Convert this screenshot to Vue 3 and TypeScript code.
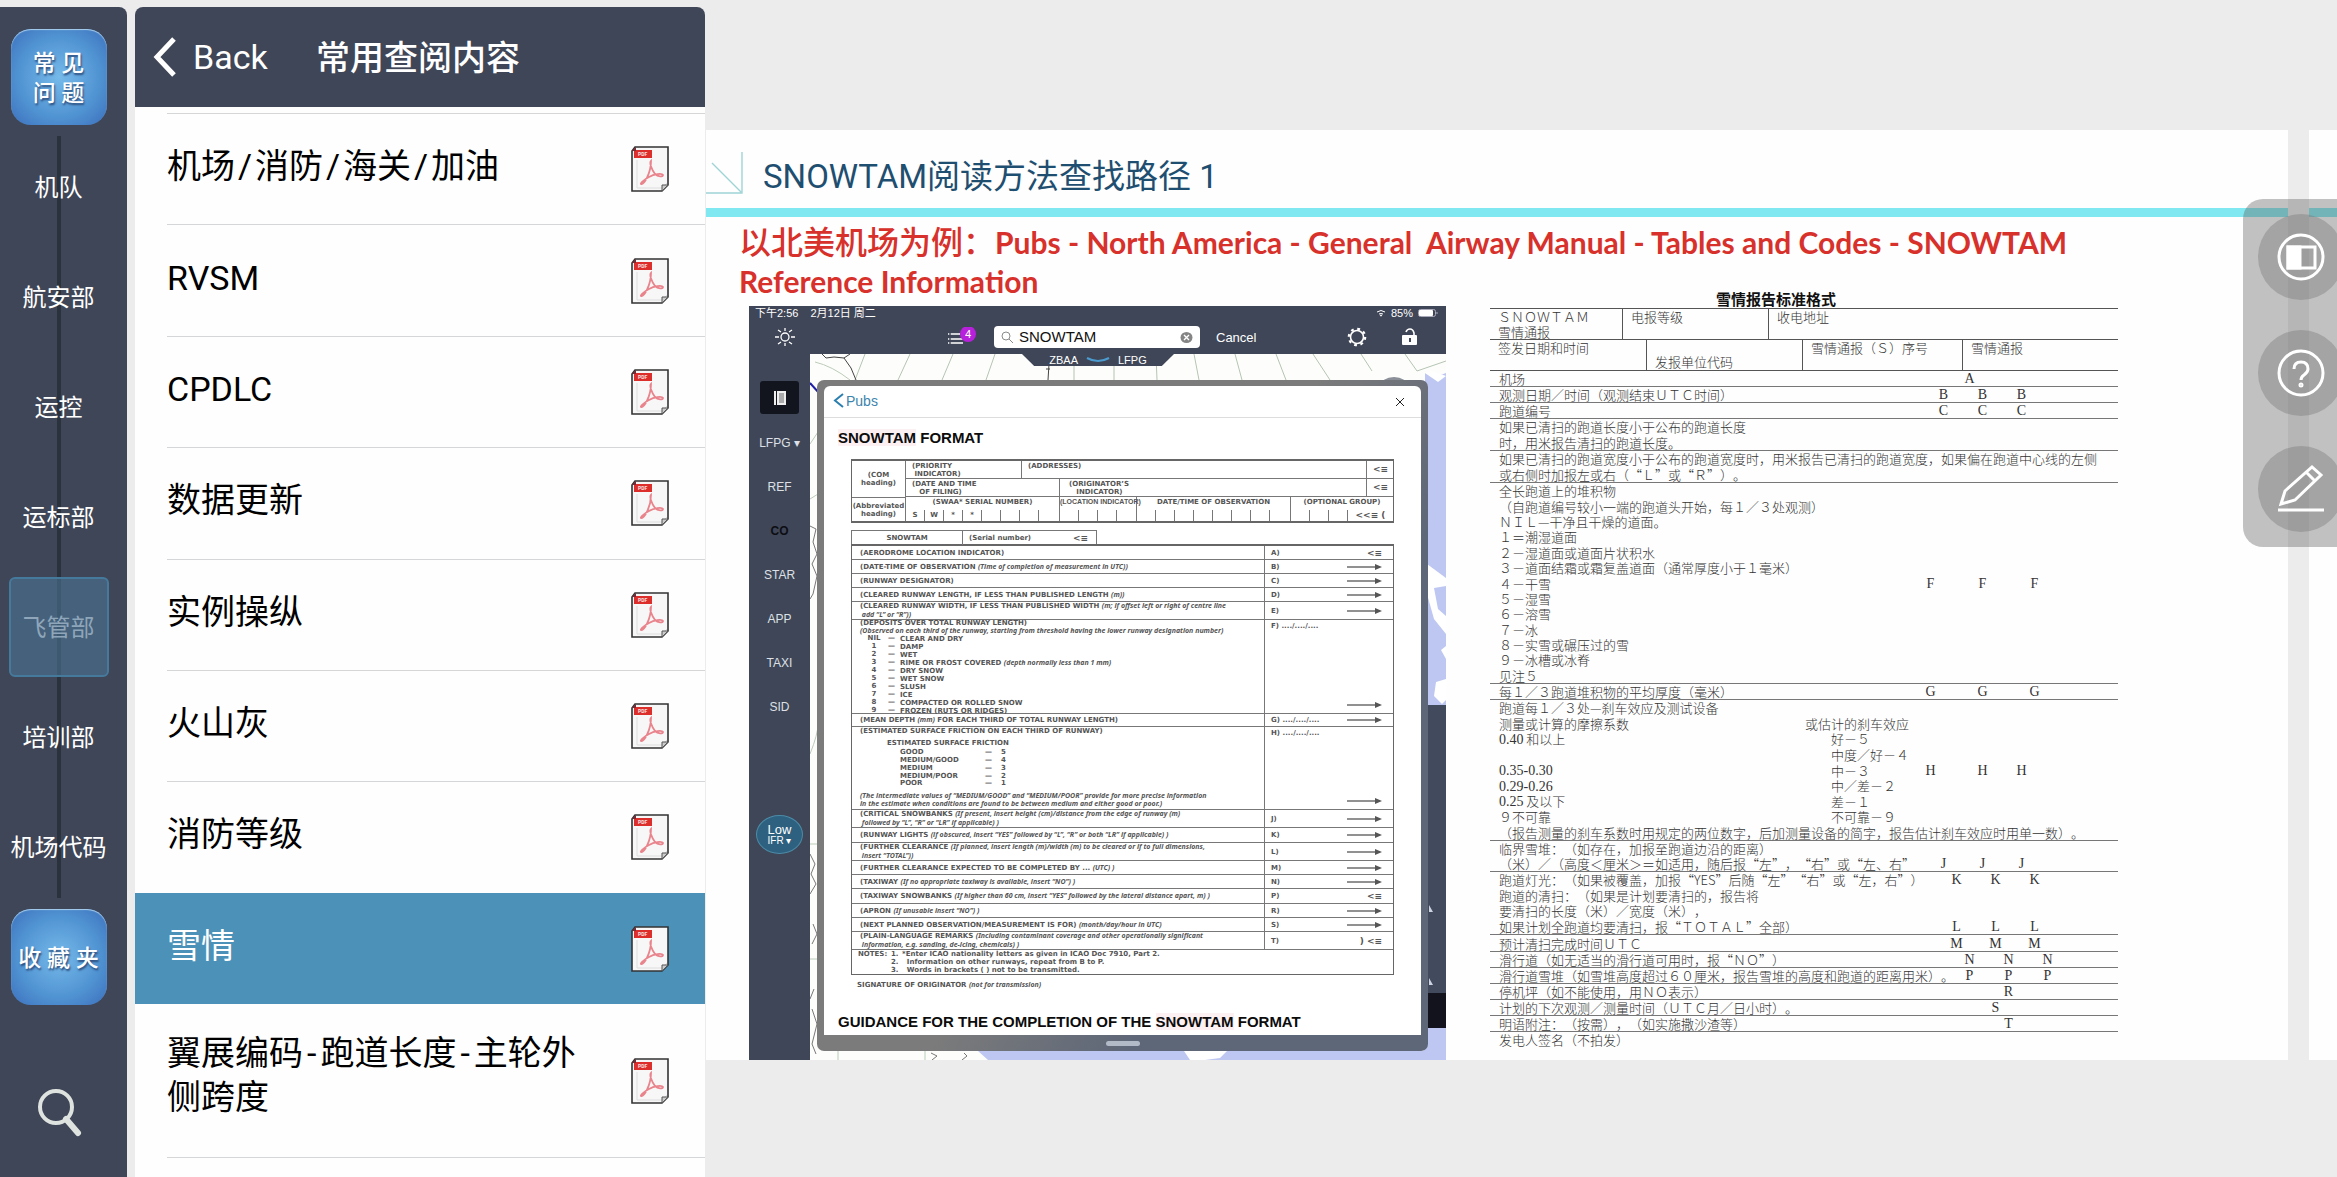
<script setup lang="ts">
import { ref } from 'vue'

const departments = ['机队', '航安部', '运控', '运标部', '飞管部', '培训部', '机场代码']
const activeDepartment = ref('飞管部')

const topics = ['机场/消防/海关/加油', 'RVSM', 'CPDLC', '数据更新', '实例操纵', '火山灰', '消防等级', '雪情', '翼展编码-跑道长度-主轮外\n侧跨度']
const activeTopic = ref('雪情')

const query = ref('SNOWTAM')
const chartTabs = ['LFPG ▾', 'REF', 'CO', 'STAR', 'APP', 'TAXI', 'SID']

interface FormRow {
  id: string
  h: number
  head?: string
  note?: string
  tail?: string
  second?: string
  mark?: string
  end?: 'arrow' | 'stop' | 'closed'
  kind?: 'deposits' | 'friction'
}

const formRows: FormRow[] = [
  { id: 'A)', h: 14, head: '(AERODROME LOCATION INDICATOR)', end: 'stop' },
  { id: 'B)', h: 14, head: '(DATE-TIME OF OBSERVATION', note: '(Time of completion of measurement in UTC))', end: 'arrow' },
  { id: 'C)', h: 14, head: '(RUNWAY DESIGNATOR)', end: 'arrow' },
  { id: 'D)', h: 14, head: '(CLEARED RUNWAY LENGTH, IF LESS THAN PUBLISHED LENGTH', note: '(m))', end: 'arrow' },
  { id: 'E)', h: 18, head: '(CLEARED RUNWAY WIDTH, IF LESS THAN PUBLISHED WIDTH', note: '(m; if offset left or right of centre line', second: 'add “L” or “R”))', end: 'arrow' },
  { id: 'F)', h: 94, mark: '..../..../....', kind: 'deposits', end: 'arrow' },
  { id: 'G)', h: 13, mark: '..../..../....', head: '(MEAN DEPTH', note: '(mm)', tail: 'FOR EACH THIRD OF TOTAL RUNWAY LENGTH)', end: 'arrow' },
  { id: 'H)', h: 83, mark: '..../..../....', kind: 'friction', end: 'arrow' },
  { id: 'J)', h: 18, head: '(CRITICAL SNOWBANKS', note: '(If present, insert height (cm)/distance from the edge of runway (m)', second: 'followed by “L”, “R” or “LR” if applicable) )', end: 'arrow' },
  { id: 'K)', h: 15, head: '(RUNWAY LIGHTS', note: '(if obscured, insert “YES” followed by “L”, “R” or both “LR” if applicable) )', end: 'arrow' },
  { id: 'L)', h: 18, head: '(FURTHER CLEARANCE', note: '(If planned, insert length (m)/width (m) to be cleared or if to full dimensions,', second: 'insert “TOTAL”))', end: 'arrow' },
  { id: 'M)', h: 14, head: '(FURTHER CLEARANCE EXPECTED TO BE COMPLETED BY ...', note: '(UTC) )', end: 'arrow' },
  { id: 'N)', h: 14, head: '(TAXIWAY', note: '(If no appropriate taxiway is available, insert “NO”) )', end: 'arrow' },
  { id: 'P)', h: 15, head: '(TAXIWAY SNOWBANKS', note: '(If higher than 60 cm, insert “YES” followed by the lateral distance apart, m) )', end: 'stop' },
  { id: 'R)', h: 14, head: '(APRON', note: '(If unusable insert “NO”) )', end: 'arrow' },
  { id: 'S)', h: 14, head: '(NEXT PLANNED OBSERVATION/MEASUREMENT IS FOR)', note: '(month/day/hour in UTC)', end: 'arrow' },
  { id: 'T)', h: 18, head: '(PLAIN-LANGUAGE REMARKS', note: '(Including contaminant coverage and other operationally significant', second: 'information, e.g. sanding, de-icing, chemicals) )', end: 'closed' },
]

const deposits = [
  ['NIL', 'CLEAR AND DRY'], ['1', 'DAMP'], ['2', 'WET'], ['3', 'RIME OR FROST COVERED', '(depth normally less than 1 mm)'],
  ['4', 'DRY SNOW'], ['5', 'WET SNOW'], ['6', 'SLUSH'], ['7', 'ICE'], ['8', 'COMPACTED OR ROLLED SNOW'], ['9', 'FROZEN (RUTS OR RIDGES)'],
]
const friction = [['GOOD', '5'], ['MEDIUM/GOOD', '4'], ['MEDIUM', '3'], ['MEDIUM/POOR', '2'], ['POOR', '1']]

// One line of the report: text, an optional middle column, and letters on a 13px raster ("_" is an empty place).
interface Line { t: string; num?: string; mid?: string; marks?: string }
const reportRows: { h: number; lines: Line[] }[] = [
  { h: 16, lines: [{ t: '机场', marks: '___A' }] },
  { h: 16, lines: [{ t: '观测日期／时间（观测结束ＵＴＣ时间）', marks: '_B__B__B' }] },
  { h: 16, lines: [{ t: '跑道编号', marks: '_C__C__C' }] },
  { h: 32, lines: [{ t: '如果已清扫的跑道长度小于公布的跑道长度' }, { t: '时，用米报告清扫的跑道长度。' }] },
  { h: 32, lines: [{ t: '如果已清扫的跑道宽度小于公布的跑道宽度时，用米报告已清扫的跑道宽度，如果偏在跑道中心线的左侧' }, { t: '或右侧时加报左或右（“Ｌ”或“Ｒ”）。' }] },
  { h: 201, lines: [
    { t: '全长跑道上的堆积物' }, { t: '（自跑道编号较小一端的跑道头开始，每１／３处观测）' }, { t: 'ＮＩＬ—干净且干燥的道面。' },
    { t: '１＝潮湿道面' }, { t: '２－湿道面或道面片状积水' }, { t: '３－道面结霜或霜复盖道面（通常厚度小于１毫米）' },
    { t: '４－干雪', marks: 'F___F___F' }, { t: '５－湿雪' }, { t: '６－溶雪' }, { t: '７－冰' }, { t: '８－实雪或碾压过的雪' },
    { t: '９－冰槽或冰脊' }, { t: '见注５' },
  ] },
  { h: 16, lines: [{ t: '每１／３跑道堆积物的平均厚度（毫米）', marks: 'G___G___G' }] },
  { h: 141, lines: [
    { t: '跑道每１／３处—刹车效应及测试设备' }, { t: '测量或计算的摩擦系数', mid: '或估计的刹车效应' },
    { num: '0.40', t: ' 和以上', mid: '　　好－５' }, { t: '', mid: '　　中度／好－４' },
    { num: '0.35-0.30', t: '', mid: '　　中－３', marks: 'H___H__H' }, { num: '0.29-0.26', t: '', mid: '　　中／差－２' },
    { num: '0.25', t: ' 及以下', mid: '　　差－１' }, { t: '９不可靠', mid: '　　不可靠－９' },
    { t: '（报告测量的刹车系数时用规定的两位数字，后加测量设备的简字，报告估计刹车效应时用单一数）。' },
  ] },
  { h: 31, lines: [{ t: '临界雪堆：（如存在，加报至跑道边沿的距离）' }, { t: '（米）／（高度＜厘米＞＝如适用，随后报“左”，“右”或“左、右”', marks: '_J__J__J' }] },
  { h: 63, lines: [
    { t: '跑道灯光：（如果被覆盖，加报“YES”后随“左”“右”或“左，右”）', marks: '__K__K__K' }, { t: '跑道的清扫：（如果是计划要清扫的，报告将' },
    { t: '要清扫的长度（米）／宽度（米），' }, { t: '如果计划全跑道均要清扫，报“ＴＯＴＡＬ”全部）', marks: '__L__L__L' },
  ] },
  { h: 17, lines: [{ t: '预计清扫完成时间ＵＴＣ', marks: '__M__M__M' }] },
  { h: 16, lines: [{ t: '滑行道（如无适当的滑行道可用时，报“ＮＯ”）', marks: '___N__N__N' }] },
  { h: 16, lines: [{ t: '滑行道雪堆（如雪堆高度超过６０厘米，报告雪堆的高度和跑道的距离用米）。', marks: '___P__P__P' }] },
  { h: 16, lines: [{ t: '停机坪（如不能使用，用ＮＯ表示）', marks: '______R' }] },
  { h: 16, lines: [{ t: '计划的下次观测／测量时间（ＵＴＣ月／日小时）。', marks: '_____S' }] },
  { h: 16, lines: [{ t: '明语附注：（按需），（如实施撒沙渣等）', marks: '______T' }] },
  { h: 16, lines: [{ t: '发电人签名（不拍发）' }] },
]
</script>

<template>
  <div class="app">
    <aside class="rail">
      <button class="tile">常 见<br />问 题</button>
      <nav class="departments">
        <button v-for="d in departments" :key="d" class="dept" :class="{ on: d === activeDepartment }" @click="activeDepartment = d">{{ d }}</button>
      </nav>
      <button class="tile">收 藏 夹</button>
      <button class="find" aria-label="搜索">
        <svg width="46" height="50" viewBox="0 0 46 50" fill="none" stroke="#dfe3e0">
          <circle cx="19" cy="19" r="16" stroke-width="4" />
          <path d="M29 31 41 45" stroke-width="6" stroke-linecap="round" />
        </svg>
      </button>
    </aside>

    <section class="panel">
      <header class="panel-head">
        <button class="back">
          <svg width="24" height="40" viewBox="0 0 24 40" fill="none" stroke="#fff" stroke-width="5"><path d="M21 2 4 20 21 38" /></svg>
          Back
        </button>
        <h1>常用查阅内容</h1>
      </header>
      <ul class="topics">
        <li v-for="t in topics" :key="t" :class="{ on: t === activeTopic, tall: t.includes('\n') }">
          <button class="topic" @click="activeTopic = t">
            <span class="topic-name"><span v-for="line in t.split('\n')" :key="line" class="topic-line"><span v-for="(p, i) in line.split(/([/-])/)" :key="i" :class="{ slash: p === '/', dash: p === '-' }">{{ p }}</span></span></span>
            <svg class="pdf" width="38" height="46" viewBox="0 0 38 46">
              <path d="M4 1H37V39L31 45H1V5Z" fill="#f7f7f7" stroke="#333" stroke-width="1.6" />
              <path d="M6 14V42H31L36 37" fill="none" stroke="#ddd" />
              <path d="M31 45V39H37Z" fill="#ccc" stroke="#555" />
              <path d="M3 4H21V12H3Z" fill="#dc2f2c" />
              <path d="M1 5 5 1V5Z" fill="#7b2b35" />
              <text x="7" y="10" font-size="5" font-weight="700" fill="#fbe3e3" font-family="Roboto, sans-serif">PDF</text>
              <path d="M20 15C18 17 21 24 24 28C27 31 32 31 32 29C31 27 23 28 18 31C12 34 9 38 10 38C13 39 20 27 20 15Z" fill="none" stroke="#e9838c" stroke-width="1.8" />
            </svg>
          </button>
        </li>
      </ul>
    </section>

    <main class="viewer">
      <article class="slide">
        <header class="slide-head">
          <svg class="corner" width="37" height="42" viewBox="0 0 37 42" fill="none" stroke="#9fd4d6" stroke-width="1.4"><path d="M36 0V41H0M6 11 35 40" /></svg>
          <h2>SNOWTAM阅读方法查找路径 1</h2>
        </header>
        <div class="lead">
          <p><span class="lead-zh">以北美机场为例：</span><span>Pubs - North America - General&nbsp; Airway Manual - Tables and Codes - SNOWTAM</span></p>
          <p>Reference Information</p>
        </div>

        <div class="figures">
          <section class="tablet">
            <div class="status">
              <span>下午2:56</span><span>2月12日 周二</span>
              <span class="status-right">
                <svg width="10" height="8" viewBox="0 0 10 8" fill="none" stroke="#fff"><path d="M1 3Q5 0 9 3M3 5Q5 4 7 5" /><circle cx="5" cy="6.5" r=".6" fill="#fff" /></svg>
                85%
                <svg width="20" height="8" viewBox="0 0 20 8"><rect x=".5" y=".5" width="17" height="7" rx="2" fill="none" stroke="#aab" /><rect x="1" y="1" width="14" height="6" rx="1" fill="#fff" /><path d="M19 3v2" stroke="#aab" /></svg>
              </span>
            </div>
            <div class="toolbar">
              <button class="t-sun" aria-label="亮度">
                <svg width="22" height="20" viewBox="-11 -10 22 20" fill="none" stroke="#fff" stroke-width="1.3">
                  <circle r="4" /><path d="M0-6V-9M0 6V9M-6 0H-10M6 0H10M-4-5-7-7M4-5 7-7M-4 5-7 7M4 5 7 7" />
                </svg>
              </button>
              <button class="t-list" aria-label="列表">
                <svg width="30" height="20" viewBox="0 0 30 20">
                  <path d="M2 7H14M2 12H17M2 16H17" stroke="#fff" stroke-width="1.4" /><path d="M4 5V18" stroke="#3f4657" stroke-width="1.4" />
                  <circle cx="22" cy="7" r="8" fill="#b721dc" />
                  <text x="22" y="11" text-anchor="middle" font-size="11" fill="#fff" font-family="Roboto, sans-serif">4</text>
                </svg>
              </button>
              <label class="t-search">
                <svg width="13" height="13" viewBox="0 0 13 13" fill="none" stroke="#8a8a8a"><circle cx="5" cy="5" r="4" /><path d="M8 8 12 12" /></svg>
                <input v-model="query" type="text" aria-label="Search" />
                <svg width="13" height="11" viewBox="0 0 13 11"><ellipse cx="6.500" cy="5.500" rx="6" ry="5.500" fill="#858585" /><path d="M4 3 9 8M9 3 4 8" stroke="#fff" stroke-width="1.4" /></svg>
              </label>
              <button class="t-cancel">Cancel</button>
              <button class="t-gear" aria-label="设置">
                <svg width="22" height="20" viewBox="-11 -10 22 20" fill="none" stroke="#fff">
                  <circle r="6.500" stroke-width="1.600" /><circle r="8.200" stroke-width="2.200" stroke-dasharray="2.800 3.640" />
                </svg>
              </button>
              <button aria-label="锁定">
                <svg width="16" height="18" viewBox="0 0 16 18"><path d="M4 4Q5 1 8 1T12 5V8" fill="none" stroke="#fff" stroke-width="1.600" /><rect y="7" width="15" height="10" rx="1" fill="#fff" /><path d="M8 10V14" stroke="#3f4657" stroke-width="2" /></svg>
              </button>
            </div>

            <div class="tablet-body">
              <nav class="charts">
                <button class="book" aria-label="出版物">
                  <svg width="14" height="16" viewBox="0 0 14 16"><path d="M1 1H3V15H1ZM4 1H13V15H4Z" fill="#eee" /><path d="M6 4H11M6 6H11M6 8H11M6 10H11M6 12H11" stroke="#666" /></svg>
                </button>
                <button v-for="c in chartTabs" :key="c" class="chart" :class="{ dark: c === 'CO' }">{{ c }}</button>
                <button class="low">Low<small>IFR ▾</small></button>
              </nav>

              <div class="map">
                <svg class="map-art" viewBox="0 0 636 706" preserveAspectRatio="none" fill="none">
                  <rect width="636" height="706" fill="#fdfefc" />
                  <path d="M55 0 45 26M100 0 88 26M143 0 132 26M185 0 176 26M264 0V26M304 0V26M346 0 347 26M384 0 389 26M425 0 432 26M466 0 476 26M503 0 520 26M551 0 562 17M595 0 607 17 636 7" stroke="#b5c4b2" />
                  <path d="M5 8Q22 12 40 26M0 90 8 78M0 145 8 140M0 400Q8 380 8 370M0 490H8M0 605H8M28 697V706M115 697V706" stroke="#bccbb8" />
                  <path d="M12 0 16 4 24 3 34 4 41 14 46 26M34 4 40 0M239 10 238 26M236 15H240" stroke="#444" />
                  <path d="M0 172 6 175 3 188 7 200 2 210 7 222 3 240 0 245M0 500 5 510 1 520 6 530 0 540M3 570 7 580 2 590M4 635 0 645M2 655 7 670 2 690 6 700M121 699 127 702 122 706M154 699 157 702 152 706" stroke="#777" />
                  <path d="M0 29 9 39" stroke="#1f1fa8" stroke-width="2" />
                  <path d="M615 19 625 23 636 19V706H614Z" fill="#bdc7f1" />
                  <path d="M615 19 622 17 636 22 628 28Z" fill="#fff" />
                  <path d="M617 210 636 224V232L624 234 628 255 636 262V280L624 265 617 240ZM636 325 626 328 624 342 632 350 636 346ZM631 296 636 292V305Z" fill="#fff" />
                  <path d="M168 697H636V706H178Z" fill="#bdc7f1" />
                  <path d="M374 697H417L410 704 395 706H380Z" fill="#fff" />
                  <rect x="614" y="351" width="22" height="288" fill="#424b5e" />
                  <path d="M619 551 623 558H619ZM619 624 623 631H619Z" fill="#cdd3df" />
                  <rect x="614" y="639" width="22" height="35" fill="#12131c" />
                  <ellipse cx="584" cy="32" rx="14" ry="9" fill="#8b8f97" />
                </svg>
                <div class="route">
                  <span>ZBAA</span>
                  <svg width="24" height="6" viewBox="0 0 24 6" fill="none" stroke="#4b9bd0" stroke-width="2"><path d="M1 1Q12 7 23 1" /></svg>
                  <span>LFPG</span>
                </div>

                <div class="sheet">
                  <header class="sheet-head">
                    <button class="pubs"><svg width="11" height="15" viewBox="0 0 11 15" fill="none" stroke="#2b7fb0" stroke-width="2"><path d="M10 1 2 7.500 10 14" /></svg>Pubs</button>
                    <button class="close" aria-label="关闭"><svg width="10" height="10" viewBox="0 0 10 10" stroke="#222"><path d="M1 1 9 9M9 1 1 9" /></svg></button>
                  </header>
                  <div class="sheet-body">
                    <h3><mark>SNOWTAM</mark> FORMAT</h3>

                    <div class="com">
                      <div class="com-left"><span>(COM<br />heading)</span><span>(Abbreviated<br />heading)</span></div>
                      <div class="com-right">
                        <div class="com-row"><span class="c-priority">(PRIORITY<br />&nbsp;INDICATOR)</span><span class="c-grow">(ADDRESSES)</span><span class="c-stop stop">&lt;≡</span></div>
                        <div class="com-row"><span class="c-date">(DATE AND TIME<br />&nbsp;&nbsp;&nbsp;OF FILING)</span><span class="c-grow c-origin">(ORIGINATOR’S<br />&nbsp;&nbsp;&nbsp;INDICATOR)</span><span class="c-stop stop">&lt;≡</span></div>
                        <div class="com-serial">
                          <div class="s-swaa">(SWAA* SERIAL NUMBER)<div class="ticks"><i>S</i><i>W</i><i>*</i><i>*</i><i></i><i></i><i></i><i></i></div></div>
                          <div class="s-loc">(LOCATION INDICATOR)<div class="ticks"><i></i><i></i><i></i><i></i></div></div>
                          <div class="s-swaa">DATE/TIME OF OBSERVATION<div class="ticks"><i v-for="n in 8" :key="n"></i></div></div>
                          <div class="s-opt">(OPTIONAL GROUP)<div class="ticks"><i></i><i></i><i></i><b class="stop">&lt;&lt;≡ (</b></div></div>
                        </div>
                      </div>
                    </div>

                    <div class="serial"><span class="serial-name">SNOWTAM</span><span class="serial-no">(Serial number)<b class="stop">&lt;≡</b></span></div>
                    <table class="form">
                      <tbody>
                        <tr v-for="r in formRows" :key="r.id">
                          <td class="f-text">
                            <div class="cell" :style="{ height: r.h - 1 + 'px' }">
                              <template v-if="r.kind === 'deposits'">
                                <p>(DEPOSITS OVER TOTAL RUNWAY LENGTH)</p>
                                <p><em>(Observed on each third of the runway, starting from threshold having the lower runway designation number)</em></p>
                                <p v-for="d in deposits" :key="d[0]" class="deposit"><span>{{ d[0] }}</span><span>—</span><span>{{ d[1] }} <em>{{ d[2] }}</em></span></p>
                              </template>
                              <template v-else-if="r.kind === 'friction'">
                                <p>(ESTIMATED SURFACE FRICTION ON EACH THIRD OF RUNWAY)</p>
                                <p class="fr-head">ESTIMATED SURFACE FRICTION</p>
                                <p v-for="f in friction" :key="f[0]" class="fr"><span>{{ f[0] }}</span><span>—</span><span>{{ f[1] }}</span></p>
                                <p class="fr-note"><em>(The intermediate values of “MEDIUM/GOOD” and “MEDIUM/POOR” provide for more precise information<br />in the estimate when conditions are found to be between medium and either good or poor.)</em></p>
                              </template>
                              <template v-else>
                                <p>{{ r.head }} <em>{{ r.note }}</em> {{ r.tail }}</p>
                                <p v-if="r.second"><em>&nbsp;{{ r.second }}</em></p>
                              </template>
                            </div>
                          </td>
                          <td class="f-mark">
                            <div class="mark" :class="{ tallmark: r.kind }">
                              <span>{{ r.id }} {{ r.mark }}</span>
                              <svg v-if="r.end === 'arrow'" width="35" height="6" viewBox="0 0 35 6"><path d="M0 3H30" stroke="#555" stroke-width="1.300" /><path d="M28 0 35 3 28 6Z" fill="#555" /></svg>
                              <span v-else class="stop">{{ r.end === 'closed' ? ') <≡' : '<≡' }}</span>
                            </div>
                          </td>
                        </tr>
                        <tr>
                          <td colspan="2" class="notes">
                            <div class="note-grid">
                              <span>NOTES:</span><span>1.</span><span>*Enter ICAO nationality letters as given in ICAO Doc 7910, Part 2.</span>
                              <span></span><span>2.</span><span>&nbsp;&nbsp;Information on other runways, repeat from B to P.</span>
                              <span></span><span>3.</span><span>&nbsp;&nbsp;Words in brackets ( ) not to be transmitted.</span>
                            </div>
                          </td>
                        </tr>
                      </tbody>
                    </table>
                    <p class="sign">SIGNATURE OF ORIGINATOR <em>(not for transmission)</em></p>
                    <h3 class="guide">GUIDANCE FOR THE COMPLETION OF THE <mark>SNOWTAM</mark> FORMAT</h3>
                  </div>
                  <div class="grip"><span></span></div>
                </div>
              </div>
            </div>
          </section>

          <section class="report">
            <h3>雪情报告标准格式</h3>
            <div class="r-top">
              <span class="w-a">ＳＮＯＷＴＡＭ<br />雪情通报</span><span class="w-b">电报等级</span><span class="w-rest">收电地址</span>
            </div>
            <div class="r-top">
              <span class="w-c">签发日期和时间</span><span class="w-d">发报单位代码</span><span class="w-e">雪情通报（Ｓ）序号</span><span class="w-rest">雪情通报</span>
            </div>
            <table class="r-table">
              <tbody>
                <tr v-for="(row, i) in reportRows" :key="i">
                  <td>
                    <div class="r-cell" :style="{ height: row.h - 1 + 'px' }">
                      <div v-for="(l, j) in row.lines" :key="j" class="r-line">
                        <span :class="{ 'r-left': l.mid || l.marks }"><span v-if="l.num" class="num">{{ l.num }}</span>{{ l.t }}</span>
                        <span v-if="l.mid || l.marks" class="r-mid">{{ l.mid }}</span>
                        <span v-if="l.marks" class="r-marks"><i v-for="(m, k) in l.marks.split('')" :key="k">{{ m === '_' ? '' : m }}</i></span>
                      </div>
                    </div>
                  </td>
                </tr>
              </tbody>
            </table>
          </section>
        </div>
      </article>
      <article class="slide next"><div class="slide-head"></div></article>

      <div class="tools">
        <button aria-label="分栏"><svg width="50" height="50" viewBox="0 0 50 50" fill="none" stroke="#fff" stroke-width="3"><circle cx="25" cy="25" r="22" /><path d="M12 15H39V36H12Z" /><path d="M12 15H24V36H12Z" fill="#fff" /></svg></button>
        <button aria-label="帮助"><svg width="50" height="50" viewBox="0 0 50 50" fill="none" stroke="#fff" stroke-width="3"><circle cx="25" cy="25" r="22" /><path d="M18 21Q18 14 25 14T32 21Q32 24 28 27Q25 29 25 32" /><circle cx="25" cy="37" r="1" /></svg></button>
        <button aria-label="编辑"><svg width="50" height="50" viewBox="0 0 50 50" fill="none" stroke="#fff" stroke-width="3"><path d="M5 40 9 27 36 3 45 11 19 36ZM30 8 39 17" /><path d="M2 46H48" /></svg></button>
      </div>
    </main>
  </div>
</template>

<style>
body { background: #ececed; }
</style>

<style scoped>
* { box-sizing: border-box; }
button { border: 0; padding: 0; background: none; color: inherit; font: inherit; cursor: pointer; }
h1, h2, h3, p, ul { margin: 0; padding: 0; }
svg { display: block; flex: none; }
.app { display: flex; min-height: 100vh; font-family: Roboto, "Noto Sans CJK SC", sans-serif; }

.rail { width: 127px; flex: none; margin-top: 7px; padding: 22px 10px 0 0; display: flex; flex-direction: column; align-items: center; background: #3f4657; color: #fff; border-top-right-radius: 8px; }
.tile { width: 96px; height: 96px; flex: none; padding-top: 3px; border-radius: 20px; background: radial-gradient(circle at 50% 50%, #76baea, #5093d2 60%, #3c6fbc); box-shadow: inset 0 1px 1px #a9d0ee; font-size: 23px; line-height: 30px; font-weight: 500; text-shadow: 1px 2px 2px #2c4c7c; white-space: nowrap; }
.departments { position: relative; width: 100%; display: flex; flex-direction: column; align-items: center; margin: 7px 0; }
.departments::before { content: ""; position: absolute; left: 57px; top: 4px; bottom: 4px; width: 4px; background: #2a323e; }
.dept { position: relative; width: 100px; height: 100px; margin: 5px 0; padding-bottom: 3px; font-size: 24px; white-space: nowrap; border-radius: 6px; }
.dept.on { background: rgba(74, 115, 148, .6); border: 2px solid #467a9c; color: #8fa6ba; }
.find { margin-top: 83px; padding-left: 2px; }

.panel { width: 570px; flex: none; margin: 7px 0 0 8px; display: flex; flex-direction: column; background: #fefefe; border-radius: 8px 8px 0 0; }
.panel-head { height: 100px; flex: none; display: flex; align-items: center; padding-left: 18px; background: #3f4657; color: #fff; border-radius: 8px 8px 0 0; font-size: 34px; }
.back { display: flex; align-items: center; gap: 16px; width: 163px; }
.panel-head h1 { padding-bottom: 4px; font-size: 34px; font-weight: 500; white-space: nowrap; }
.topics { list-style: none; flex: 1; display: flex; flex-direction: column; padding: 6px 0 19px; }
.topics li { flex: 1 1 111px; display: flex; padding-left: 32px; }
.topics li.tall { flex: none; height: 154px; }
.topic { flex: 1; display: flex; align-items: center; justify-content: space-between; padding: 0 36px 0 0; text-align: left; font-size: 34px; line-height: 44px; border-top: 1px solid #d4d6d8; }
.topic-name { width: 420px; padding-bottom: 6px; }
.topic-line { display: block; white-space: nowrap; }
.tall .topic { border-bottom: 1px solid #d4d6d8; }
.tall .topic-name { padding-bottom: 12px; }
.topics li.on { background: #4c91b8; color: #fff; }
.topics li.on .topic, .topics li.on + li .topic { border-top-color: transparent; }
.slash { margin: 0 3px; }
.dash { margin: 0 4px; }

.viewer { position: relative; flex: 1; min-width: 0; display: flex; align-items: flex-start; gap: 21px; padding: 130px 0 0 1px; overflow: hidden; }
.slide { flex: 1; height: 930px; background: #fefefe; }
.next { flex: none; width: 28px; }
.slide-head { position: relative; height: 87px; padding: 24px 0 0 57px; border-bottom: 9px solid #80e8f0; }
.corner { position: absolute; left: 0; top: 22px; }
.slide-head h2 { font-size: 33px; line-height: 46px; font-weight: 400; color: #1f4f70; }
.lead { padding: 5px 0 0 33px; height: 89px; font: 700 30px/39px Lato, "Noto Sans CJK SC", sans-serif; color: #d8312b; white-space: nowrap; }
.lead p { display: flex; align-items: baseline; }
.lead-zh { font-size: 32px; font-weight: 500; }
.figures { display: flex; align-items: flex-start; gap: 44px; padding-left: 43px; }

.tablet { width: 697px; height: 754px; flex: none; display: flex; flex-direction: column; background: #3f4657; color: #fff; font-family: "Liberation Sans", "Noto Sans CJK SC", sans-serif; }
.status { display: flex; gap: 12px; padding: 0 8px 0 6px; font-size: 11px; line-height: 14px; height: 14px; }
.status-right { margin-left: auto; display: flex; align-items: center; gap: 5px; }
.toolbar { display: flex; align-items: center; height: 34px; padding: 0 28px 0 25px; }
.t-sun { margin-right: 150px; }
.t-search { width: 206px; height: 22px; margin: 0 16px 0 18px; display: flex; align-items: center; gap: 5px; padding: 0 7px; background: #fff; border-radius: 4px; }
.t-search input { flex: 1; min-width: 0; border: 0; padding: 0; outline: 0; font: 15px/20px "Liberation Sans", sans-serif; color: #111; background: none; }
.t-cancel { font-size: 13px; }
.t-gear { margin: 0 34px 0 auto; }
.tablet-body { flex: 1; display: flex; min-height: 0; }
.charts { width: 61px; flex: none; display: flex; flex-direction: column; align-items: center; padding-top: 27px; font-size: 12px; }
.book { width: 39px; height: 33px; margin-bottom: 7px; display: grid; place-items: center; background: #12151e; border-radius: 3px; }
.chart { height: 44px; white-space: nowrap; color: #dde0e6; }
.chart.dark { color: #0c0e13; font-weight: 700; }
.low { width: 47px; height: 39px; margin-top: 86px; border-radius: 50%; background: #2d617f; border: 1px solid #4c8aa6; font-size: 13px; line-height: 12px; }
.low small { display: block; font-size: 10px; line-height: 10px; }
.map { position: relative; flex: 1; display: flex; flex-direction: column; align-items: flex-start; overflow: hidden; }
.map-art { position: absolute; inset: 0; width: 100%; height: 100%; }
.route { position: relative; align-self: center; width: 152px; height: 12px; margin-right: 60px; display: flex; justify-content: center; align-items: center; gap: 8px; background: #3f4657; clip-path: polygon(0 0, 100% 0, 92% 100%, 8% 100%); font-size: 11px; line-height: 12px; }
.sheet { position: relative; margin: 14px 0 0 7px; width: 611px; height: 671px; display: flex; flex-direction: column; padding: 6px 7px 0; background: linear-gradient(120deg, #7b7b7b 50%, #5e6778 70%); border-radius: 7px; color: #555; }
.sheet-head { height: 32px; flex: none; display: flex; justify-content: space-between; align-items: center; padding: 0 16px 0 9px; background: #fff; border-bottom: 1px solid #ddd; border-radius: 6px 6px 0 0; }
.pubs { display: flex; align-items: center; gap: 2px; padding-bottom: 2px; font-size: 14px; color: #3d84ad; }
.sheet-body { flex: 1; min-height: 0; padding: 11px 27px 0; background: #fff; font: 700 7px/8px "DejaVu Sans", sans-serif; white-space: nowrap; }
.sheet-body em { font-family: "Noto Sans", sans-serif; }
.sheet-body h3 { margin-left: -13px; font: 700 15px/18px "Liberation Sans", sans-serif; color: #0c0c0c; }
.sheet-body mark { background: #fdf0f2; color: inherit; }
.sheet-body .stop { font: 700 9px/10px "DejaVu Sans", sans-serif; }
.com { display: flex; height: 64px; margin-top: 12px; border: 2px solid #666; border-width: 2px 1px; }
.com-left { width: 54px; flex: none; display: flex; flex-direction: column; text-align: center; border-right: 1px solid #777; }
.com-left span { padding-top: 10px; height: 36px; }
.com-left span + span { padding-top: 4px; height: 24px; border-top: 1px solid #777; }
.com-right { flex: 1; }
.com-row { display: flex; height: 18px; border-bottom: 1px solid #777; }
.com-row > span { padding: 1px 0 0 6px; border-right: 1px solid #777; }
.com-row .c-priority { width: 116px; }
.com-row .c-date { width: 154px; }
.com-row .c-grow { flex: 1; }
.com-row .c-origin { padding-left: 9px; }
.com-row .c-stop { width: 26px; border: 0; padding-top: 3px; }
.com-serial { display: flex; height: 24px; text-align: center; }
.com-serial > div { border-right: 1px solid #777; padding-top: 1px; }
.com-serial > .s-swaa { width: 154px; }
.com-serial > .s-loc { width: 77px; font: 700 7px/8px "Liberation Sans", sans-serif; }
.com-serial > .s-opt { flex: 1; border: 0; }
.ticks { display: flex; height: 11px; margin-top: 4px; font-size: 7px; line-height: 11px; }
.ticks i { width: 19px; flex: none; border-right: 1px solid #777; font-style: normal; }
.s-swaa .ticks i:last-child, .s-loc .ticks i:last-child { border: 0; }
.ticks b { flex: 1; }
.serial { display: flex; width: 246px; height: 15px; margin-top: 7px; border: 1px solid #777; border-bottom: 0; line-height: 14px; }
.serial-name { width: 111px; text-align: center; border-right: 1px solid #777; }
.serial-no { flex: 1; display: flex; justify-content: space-between; align-items: center; padding: 0 8px 0 6px; }
.form { width: 543px; border-collapse: separate; border-spacing: 0; border: 1px solid #666; border-top-width: 2px; table-layout: fixed; margin-top: -1px; }
.form td { padding: 0; border-bottom: 1px solid #777; }
.form tr:last-child td { border-bottom: 0; }
.f-text { width: 412px; }
.cell { padding-left: 8px; display: flex; flex-direction: column; justify-content: space-evenly; }
.cell p { line-height: 7px; }
.form .f-mark { border-left: 1px solid #777; padding: 0 11px 0 6px; height: 1px; }
.mark { height: 100%; display: flex; justify-content: space-between; align-items: center; }
.tallmark { align-items: flex-end; padding-bottom: 5px; }
.tallmark span { align-self: flex-start; padding-top: 2px; }
.deposit { display: grid; grid-template-columns: 28px 12px 1fr; padding-left: 0; }
.deposit span:first-child { text-align: center; }
.cell .fr-head { padding: 3px 0 2px 27px; line-height: 8px; }
.fr { display: grid; grid-template-columns: 85px 16px 1fr; padding-left: 40px; }
.cell .fr-note { padding-top: 4px; line-height: 8px; }
.note-grid { display: grid; grid-template-columns: 33px 11px 1fr; height: 24px; padding-left: 6px; }
.sign { padding: 6px 0 0 6px; }
.sheet-body .guide { margin-top: 24px; }
.grip { height: 16px; flex: none; display: grid; place-items: center; }
.grip span { width: 34px; height: 5px; border-radius: 3px; background: #b3bac7; }

.report { width: 628px; flex: none; margin-top: -18px; font: 300 13px/15px "Noto Sans CJK SC", sans-serif; text-spacing-trim: space-all; color: #333; white-space: nowrap; }
.report h3 { height: 20px; padding-right: 56px; text-align: center; font-size: 15px; line-height: 22px; font-weight: 700; color: #111; }
.r-top { display: flex; height: 31px; border-top: 1px solid #555; }
.r-top span { padding-left: 8px; border-right: 1px solid #555; }
.r-top .w-a { width: 133px; }
.r-top .w-b { width: 146px; }
.r-top .w-c { width: 157px; }
.r-top .w-d { width: 156px; padding-top: 14px; }
.r-top .w-e { width: 160px; }
.r-top .w-rest { flex: 1; border: 0; }
.r-table { width: 100%; border-collapse: separate; border-spacing: 0; border-top: 1px solid #555; }
.r-table td { padding: 0 0 0 9px; border-bottom: 1px solid #777; }
.r-table tr:last-child td { border-bottom: 0; }
.r-cell { display: flex; flex-direction: column; }
.r-line { flex: 1; display: flex; align-items: center; min-height: 0; white-space: pre; }
.r-left { width: 306px; flex: none; }
.r-mid { width: 119px; flex: none; }
.r-marks { display: flex; }
.r-marks i { width: 13px; text-align: center; font: 14px/15px "Liberation Serif", serif; }
.num { font: 14px/15px "Liberation Serif", serif; }

.tools { position: absolute; right: 0; top: 199px; width: 94px; height: 348px; padding: 15px 0 0 15px; display: flex; flex-direction: column; gap: 30px; background: rgba(95, 95, 95, .38); border-radius: 20px 0 0 20px; overflow: hidden; }
.tools button { width: 86px; height: 86px; flex: none; display: grid; place-items: center; border-radius: 50%; background: rgba(120, 120, 120, .4); }
</style>
